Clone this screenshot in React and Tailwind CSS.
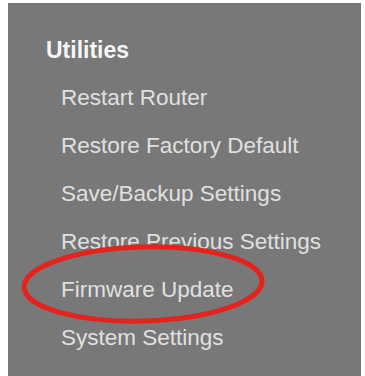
const items = [
  'Restart Router',
  'Restore Factory Default',
  'Save/Backup Settings',
  'Restore Previous Settings',
  'Firmware Update',
  'System Settings',
];

export default function App() {
  return (
    <div className="relative h-[376px] w-[365px] overflow-hidden bg-white font-['Liberation_Sans',Arial,sans-serif]">
      <div className="ml-2 mt-[3px] h-[373px] w-[353px] bg-[#787878] pl-[38px] pt-[23px]">
        <div className="text-[23px] font-bold leading-[48px] text-[#f7f7f7]">Utilities</div>
        <ul className="pl-[15px]">
          {items.map(label => (
            <li key={label} className="text-[22.5px] leading-[48px] text-[#e0e0e0]">
              {label}
            </li>
          ))}
        </ul>
      </div>

      {/* hand-drawn highlight round Firmware Update */}
      <svg className="pointer-events-none absolute left-0 top-0" width="365" height="376">
        <ellipse
          cx="143"
          cy="284"
          rx="119"
          ry="37"
          fill="none"
          stroke="#e5231d"
          strokeWidth="5"
          transform="rotate(-1.5 143 284)"
        />
      </svg>
    </div>
  );
}
